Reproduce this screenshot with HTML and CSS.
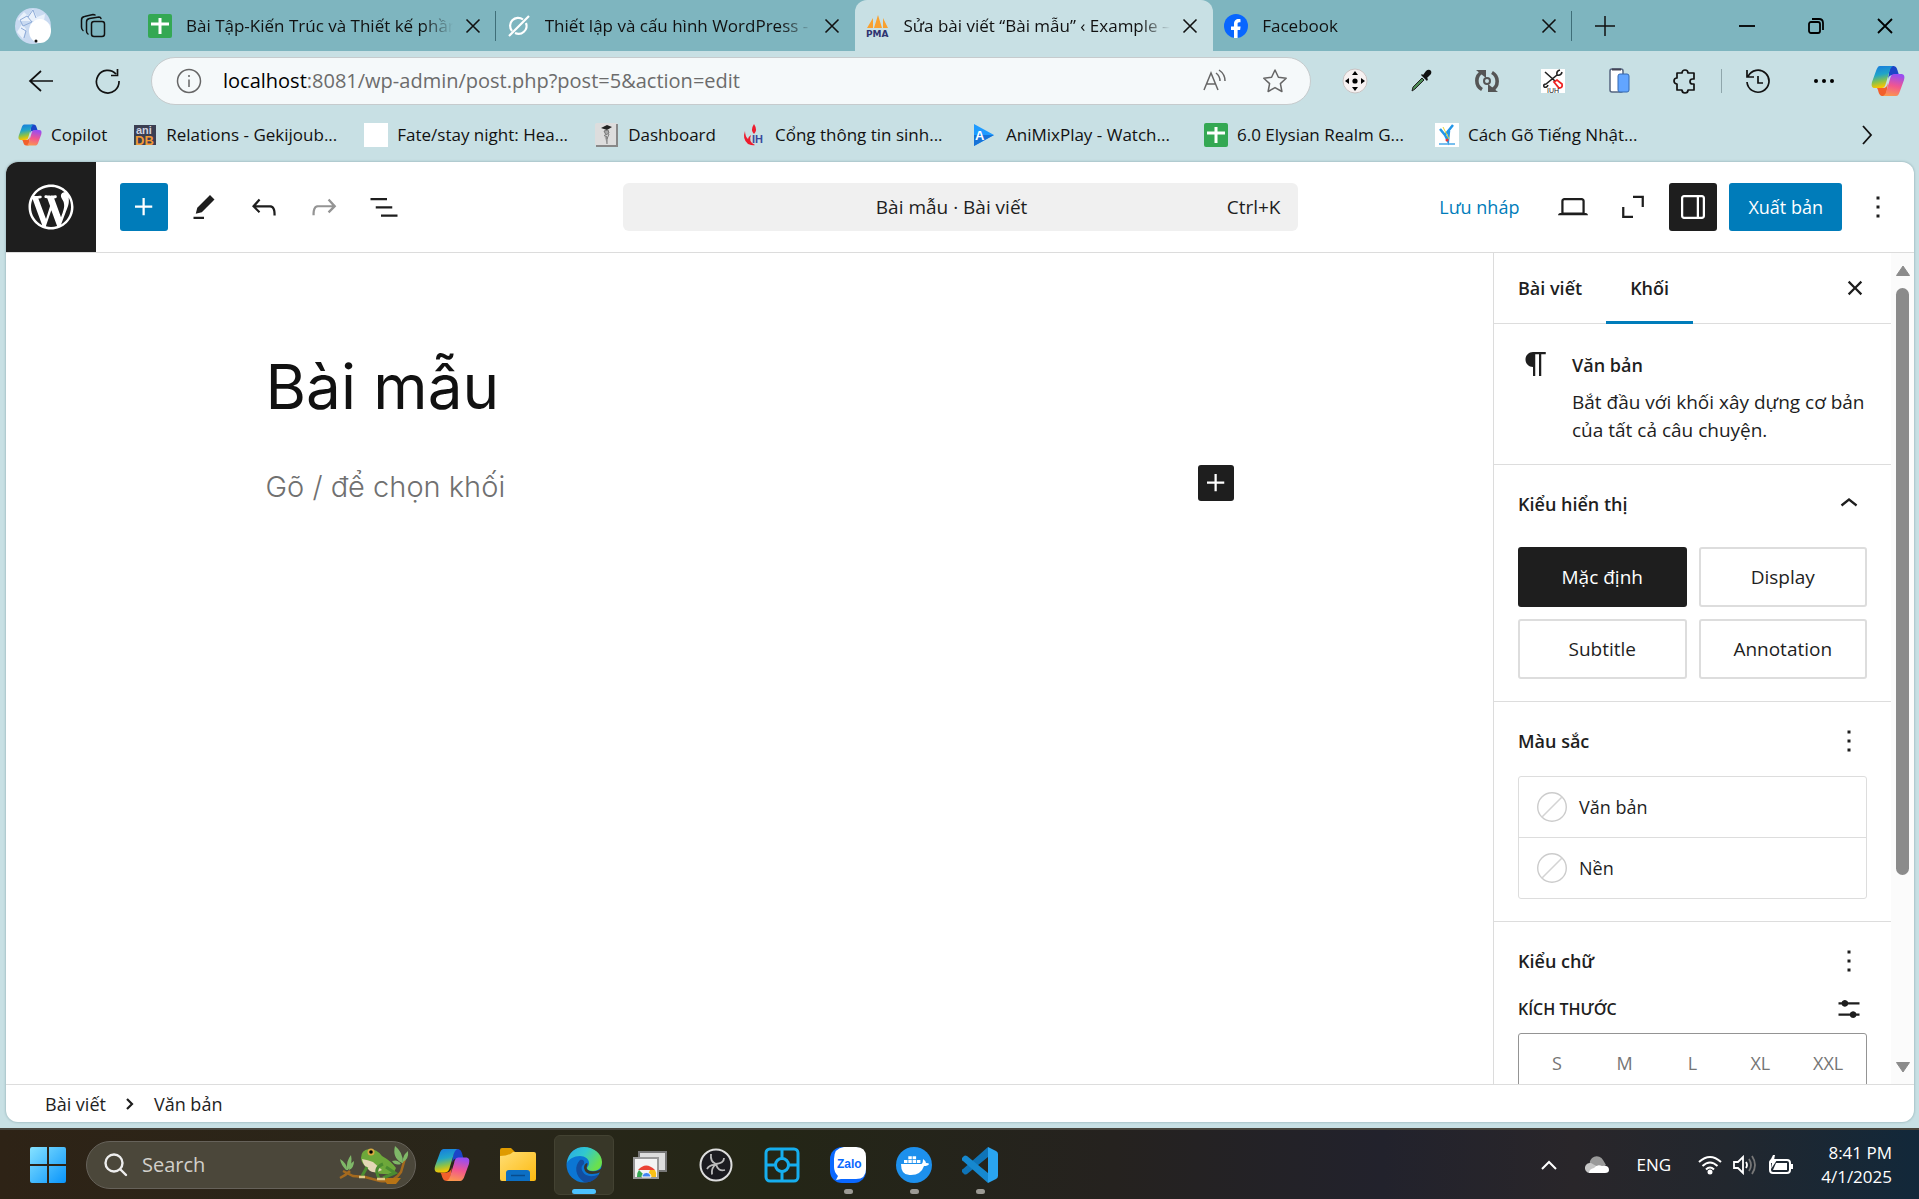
FILE: index.html
```html
<!DOCTYPE html>
<html lang="vi">
<head>
<meta charset="utf-8">
<meta name="viewport" content="width=device-width, initial-scale=1">
<title>Sửa bài viết “Bài mẫu” ‹ Example</title>
<link rel="stylesheet" href="styles.css">
</head>
<body>
<svg class="sprite" aria-hidden="true">
  <defs>
    <linearGradient id="cp-a" x1="0" y1="0" x2="0.2" y2="1"><stop offset="0" stop-color="#1678e0"/><stop offset=".45" stop-color="#21a5c8"/><stop offset=".75" stop-color="#8ac24a"/><stop offset="1" stop-color="#f8c400"/></linearGradient>
    <linearGradient id="cp-b" x1="0.4" y1="0" x2="0.2" y2="1"><stop offset="0" stop-color="#9a4df0"/><stop offset=".5" stop-color="#f2568f"/><stop offset="1" stop-color="#fb9a4b"/></linearGradient>
    <linearGradient id="edge-a" x1="0" y1="0" x2="1" y2="0.5"><stop offset="0" stop-color="#2aa8e8"/><stop offset=".5" stop-color="#30c8d0"/><stop offset="1" stop-color="#6be04c"/></linearGradient>
    <linearGradient id="win" x1="0" y1="0" x2="1" y2="1"><stop offset="0" stop-color="#86e2ff"/><stop offset="1" stop-color="#0894fb"/></linearGradient>
    <linearGradient id="folder" x1="0" y1="0" x2="1" y2="1"><stop offset="0" stop-color="#ffde74"/><stop offset="1" stop-color="#fdb90f"/></linearGradient>
    <symbol id="copilot" viewBox="0 0 34 34">
      <path d="M19 2h3c3 0 4 2 5 6l1 3h-6c-3 0-4 1-5 4z" fill="#1b45c8"/>
      <path d="M15 32h-3c-3 0-4-2-5-6l-1-2h6c3 0 4-2 5-5z" fill="#f2602c"/>
      <path d="M9 2h13c-2 1-3 3-4 7l-3 10c-1 4-2 5-5 5H4c-3 0-4-2-3-6L5 7c1-3 2-5 4-5z" fill="url(#cp-a)"/>
      <path d="M25 32H12c2-1 3-3 4-7l3-10c1-4 2-5 5-5h6c3 0 4 2 3 6l-4 11c-1 3-2 5-4 5z" fill="url(#cp-b)"/>
    </symbol>
    <symbol id="x" viewBox="0 0 24 24"><path d="M5.500 5.500l13 13M18.500 5.500l-13 13" fill="none" stroke="currentColor" stroke-width="1.600"/></symbol>
    <symbol id="sheet" viewBox="0 0 24 24"><rect width="24" height="24" rx="2" fill="#34a853"/><path d="M12 4v16M3 10h18" stroke="#fff" stroke-width="3"/></symbol>
    <symbol id="dots" viewBox="0 0 24 24"><path d="M13 19h-2v-2h2v2zm0-6h-2v-2h2v2zm0-6h-2V5h2v2z" fill="currentColor"/></symbol>
    <symbol id="plus" viewBox="0 0 24 24"><path d="M11 12.500V17.500H12.500V12.500H17.500V11H12.500V6H11V11H6V12.500H11Z" fill="currentColor"/></symbol>
    <symbol id="none" viewBox="0 0 30 30"><circle cx="15" cy="15" r="14.300" fill="#fff" stroke="#ccc" stroke-width="1.400"/><path d="M5 25L25 5" stroke="#d4d4d4" stroke-width="1.600"/></symbol>
  </defs>
</svg>

<header class="browser">
  <div class="tabstrip">
    <div class="strip-start">
      <button class="plain" aria-label="Profile"><svg width="36" height="36" viewBox="0 0 36 36"><circle cx="18" cy="18" r="18" fill="#c9daf1"/><path d="M3 11l6-7 4 4 5-7 4 8 8-3-1 7H4zM2 24l5-8 4 5-3 10z" fill="#e9f1fb"/><path d="M5 12l7-4 5 6-9 4zM6 20l5 3-2 7M13 9l5-7 3 8" fill="none" stroke="#8eabd8"/><ellipse cx="25" cy="23" rx="11" ry="12" fill="#fff"/><circle cx="21" cy="33" r="1.500" fill="#111"/></svg></button>
      <button class="plain" aria-label="Workspaces"><svg width="26" height="26" viewBox="0 0 26 26" fill="none" stroke="#111" stroke-width="1.500" stroke-linecap="round"><rect x="11.500" y="8.500" width="13" height="15" rx="2.500"/><path d="M8 21Q6.500 20 6.500 18V9q0-3 3-3.500L19 4q1.500 0 2 1.500M3 17.500Q1.500 16.500 1.500 14V7q0-3 3-3.500L13 1.500q1.500 0 2 .5"/></svg></button>
    </div>
    <nav class="tabs">
      <div class="tab tab-sep"><svg class="fav"><use href="#sheet"/></svg><span class="tab-label">Bài Tập-Kiến Trúc và Thiết kế phần</span><button class="plain close" aria-label="Close tab"><svg><use href="#x"/></svg></button></div>
      <div class="tab"><svg class="fav" viewBox="0 0 24 24" fill="none" stroke="#fff" stroke-width="2.200"><path d="M2 22L22 2M16 5.500A8 8 0 0 0 5 17M19 9a8 8 0 0 1-11 10"/></svg><span class="tab-label">Thiết lập và cấu hình WordPress -</span><button class="plain close" aria-label="Close tab"><svg><use href="#x"/></svg></button></div>
      <div class="tab tab-active"><svg class="fav" viewBox="0 0 24 24"><path d="M7 4v10H1zM12 1l4 13H8zM17 4l5 10h-5z" fill="#f9a12f"/><text class="pma" x="0" y="23">PMA</text></svg><span class="tab-label">Sửa bài viết “Bài mẫu” ‹ Example –</span><button class="plain close" aria-label="Close tab"><svg><use href="#x"/></svg></button></div>
      <div class="tab tab-sep"><svg class="fav" viewBox="0 0 24 24"><circle cx="12" cy="12" r="12" fill="#0866ff"/><path d="M10 24v-8H7v-3.600h3V10c0-3.500 2-5 4.500-5 1 0 2 .2 2 .2v3h-1.300c-1.300 0-1.600.8-1.600 1.700v2.500h3l-.5 3.600h-2.500v8z" fill="#fff"/></svg><span class="tab-label">Facebook</span><button class="plain close" aria-label="Close tab"><svg><use href="#x"/></svg></button></div>
    </nav>
    <div class="strip-end">
      <button class="plain" aria-label="New tab"><svg width="24" height="24" viewBox="0 0 24 24" stroke="#111" stroke-width="1.500"><path d="M12 2v20M2 12h20"/></svg></button>
      <div class="window-controls">
        <button class="plain" aria-label="Minimize"><svg width="18" height="18" viewBox="0 0 18 18" stroke="#000" stroke-width="1.800"><path d="M1 9h16"/></svg></button>
        <button class="plain" aria-label="Restore"><svg width="18" height="18" viewBox="0 0 18 18" fill="none" stroke="#000" stroke-width="1.800"><rect x="2" y="5" width="11" height="11" rx="2"/><path d="M5 2h7q4 0 4 4v7"/></svg></button>
        <button class="plain" aria-label="Close window"><svg width="26" height="26" viewBox="0 0 26 26" stroke="#000" stroke-width="1.800"><path d="M6 6l14 14M20 6L6 20"/></svg></button>
      </div>
    </div>
  </div>

  <div class="toolbar">
    <button class="plain slot" aria-label="Back"><svg width="26" height="26" viewBox="0 0 26 26" fill="none" stroke="#111" stroke-width="1.700"><path d="M13 3L2 13l11 10M2 13h23"/></svg></button>
    <button class="plain slot" aria-label="Refresh"><svg width="26" height="26" viewBox="0 0 26 26" fill="none" stroke="#111" stroke-width="1.700"><path d="M22 6a11.300 11.300 0 1 0 3 7M23.500 1v6.500H17"/></svg></button>
    <div class="address">
      <svg width="26" height="26" viewBox="0 0 26 26" fill="none" stroke="#666" stroke-width="1.500"><circle cx="13" cy="13" r="11.500"/><path d="M13 11.500V19M13 7v2"/></svg>
      <p class="url"><span class="host">localhost</span>:8081/wp-admin/post.php?post=5&amp;action=edit</p>
      <button class="plain" aria-label="Read aloud"><svg width="26" height="26" viewBox="0 0 26 26" fill="none" stroke="#666" stroke-width="1.500"><path d="M2 22L9 5l7 17M4.500 16h9M14 5q4 3 4 8M17 2q6 4 6 11"/></svg></button>
      <button class="plain" aria-label="Favorite"><svg width="26" height="26" viewBox="0 0 26 26" fill="none" stroke="#666" stroke-width="1.500" stroke-linejoin="round"><path d="M13 2l3.400 7.200 7.800 1-5.800 5.400 1.500 7.900-6.900-3.900-6.900 3.900 1.500-7.900L1.800 10.200l7.800-1z"/></svg></button>
    </div>
    <button class="plain slot" aria-label="Move extension"><svg width="26" height="26" viewBox="0 0 26 26"><circle cx="13" cy="13" r="12" fill="#f6f1f1" stroke="#c9c3c3"/><path d="M13 3l3 4h-6zM13 23l3-4h-6zM3 13l4-3v6zM23 13l-4-3v6z"/><circle cx="13" cy="13" r="2.600"/></svg></button>
    <button class="plain slot" aria-label="Color picker"><svg width="24" height="24" viewBox="0 0 24 24"><path d="M3 22l1-4L13 9l2 2-9 9z" fill="#4c8a55" stroke="#222"/><path d="M12 6l6 6 1-2-1-1 4-4q1-3-1-4t-4 1l-3 4-1-1z" fill="#111"/></svg></button>
    <button class="plain slot" aria-label="Sync extension"><svg width="26" height="26" viewBox="0 0 26 26" fill="none" stroke="#555" stroke-width="3.600"><path d="M8 4A10 10 0 0 0 8 21.500M18 22a10 10 0 0 0 0-17.500"/><path d="M2 2h10v8zM24 24H14v-8z" fill="#555" stroke="none"/><circle cx="13" cy="13" r="3" stroke-width="2"/></svg></button>
    <button class="plain slot" aria-label="IUH tools"><svg width="24" height="24" viewBox="0 0 24 24"><path d="M0 0h24v24H0z" fill="#fff"/><path d="M4 3l10 9M3 18q-1-3 2-3L16 6q-1-4 3-5M16 6q4 1 5-3M3 18q3 1 4-2" stroke="#222" stroke-width="1.600" fill="none"/><path d="M13 13l3-2 5 4q1 4-3 4z" fill="none" stroke="#e22" stroke-width="1.800"/><text class="tiny" x="6" y="24">IUH</text></svg></button>
    <button class="plain slot" aria-label="Responsive view"><svg width="24" height="26" viewBox="0 0 24 26"><rect x="3" y="1" width="13" height="23" rx="2" fill="#fff" stroke="#556580" stroke-width="1.500"/><path d="M5 1.500h9" stroke="#445" stroke-width="2"/><rect x="11" y="6" width="11" height="18" rx="2" fill="#62a5ff" stroke="#3469b0"/></svg></button>
    <button class="plain slot" aria-label="Extensions"><svg width="26" height="26" viewBox="0 0 26 26" fill="none" stroke="#111" stroke-width="1.700" stroke-linejoin="round"><path d="M5 5h5a3 3 0 0 1 6 0h6v6h-1.500a2.500 2.500 0 0 0 0 5H22v6h-6a3 3 0 0 1-6 0H5v-6a3 3 0 0 1 0-6z"/></svg></button>
    <span class="tool-sep"></span>
    <button class="plain slot" aria-label="History"><svg width="26" height="26" viewBox="0 0 26 26" fill="none" stroke="#111" stroke-width="1.700"><path d="M2 2v7h7M3 8.500A11 11 0 1 1 2 14M13 8v7h5"/></svg></button>
    <button class="plain slot" aria-label="More"><svg width="22" height="6" viewBox="0 0 22 6"><circle cx="3" cy="3" r="2"/><circle cx="11" cy="3" r="2"/><circle cx="19" cy="3" r="2"/></svg></button>
    <button class="plain slot slot-last" aria-label="Copilot"><svg width="34" height="34"><use href="#copilot"/></svg></button>
  </div>

  <nav class="bookmarks">
    <a class="bm" href="#"><svg class="fav"><use href="#copilot"/></svg><span>Copilot</span></a>
    <a class="bm bm-long" href="#"><svg class="fav" viewBox="0 0 24 24"><path d="M1 2h22v20H1z" fill="#3b3f52"/><text class="ani" x="3" y="11">ani</text><text class="db" x="2" y="22">DB</text></svg><span>Relations - Gekijoub...</span></a>
    <a class="bm bm-long" href="#"><svg class="fav" viewBox="0 0 24 24"><path d="M0 0h24v24H0z" fill="#fff"/></svg><span>Fate/stay night: Hea...</span></a>
    <a class="bm" href="#"><svg class="fav" viewBox="0 0 24 24"><rect width="23" height="23" rx="2" fill="#ddd"/><path d="M22 1v22H1" fill="none" stroke="#888" stroke-width="2"/><path d="M6 5l6-3 5 2-5 3z" fill="#222"/><path d="M9 8l4-1 1 3-3 2zM9 12l3 2v7M14 11l-2 5" fill="#aaa" stroke="#777"/></svg><span>Dashboard</span></a>
    <a class="bm bm-long" href="#"><svg class="fav" viewBox="0 0 24 24"><path d="M3 8q-3 8 3 13 5 2 7 1-7-3-4-10-3 2-3 4-3-3-3-8zM12 1q-4 6 0 10 4-4 0-10z" fill="#ed1c2e"/><text class="ih" x="10" y="20">IH</text></svg><span>Cổng thông tin sinh...</span></a>
    <a class="bm bm-long" href="#"><svg class="fav" viewBox="0 0 24 24"><path d="M1 1l20 11L1 23z" fill="#1e9bff"/><path d="M1 23V12h20z" fill="#1673d8"/><text class="am" x="2" y="17">A</text></svg><span>AniMixPlay - Watch...</span></a>
    <a class="bm bm-long" href="#"><svg class="fav"><use href="#sheet"/></svg><span>6.0 Elysian Realm G...</span></a>
    <a class="bm bm-long" href="#"><svg class="fav" viewBox="0 0 24 24"><path d="M0 0h24v24H0z" fill="#fff"/><path d="M5 6l5 6 8-10M10 12l3 6 1-10" fill="none" stroke="#2196e8" stroke-width="2.500"/><path d="M8 4l6 12" stroke="#e6d531" stroke-width="1"/><circle cx="12" cy="17" r="1.500" fill="#e33"/><path d="M4 21h16" stroke="#4aa8e8" stroke-width="1.500"/></svg><span>Cách Gõ Tiếng Nhật...</span></a>
    <button class="plain bm-more" aria-label="More bookmarks"><svg width="12" height="20" viewBox="0 0 12 20" fill="none" stroke="#111" stroke-width="1.800"><path d="M2 1l8 9-8 9"/></svg></button>
  </nav>
</header>

<main class="page">
  <div class="ed-header">
    <div class="ed-left">
      <a class="wp-logo" href="#" aria-label="WordPress"><svg width="54" height="54" viewBox="-2 -2 24 24" fill="#fff"><path d="M20 10c0-5.510-4.490-10-10-10C4.480 0 0 4.490 0 10c0 5.520 4.480 10 10 10 5.510 0 10-4.480 10-10zM7.780 15.370L4.370 6.220c.55-.02 1.170-.08 1.170-.08.5-.06.44-1.130-.06-1.110 0 0-1.450.11-2.370.11-.18 0-.37 0-.58-.01C4.120 2.690 6.870 1.110 10 1.110c2.330 0 4.450.87 6.050 2.340-.68-.11-1.650.39-1.650 1.580 0 .74.45 1.360.9 2.100.35.61.55 1.360.55 2.460 0 1.490-1.400 5-1.400 5l-3.030-8.370c.54-.02.82-.17.82-.17.5-.05.44-1.250-.06-1.220 0 0-1.440.12-2.380.12-.87 0-2.330-.12-2.330-.12-.5-.03-.56 1.200-.06 1.220l.92.08 1.260 3.410zM17.410 10c.24-.64.74-1.870.43-4.250.7 1.290 1.050 2.710 1.050 4.250 0 3.290-1.730 6.240-4.400 7.780.97-2.590 1.940-5.200 2.920-7.780zM6.100 18.090C3.120 16.650 1.110 13.530 1.110 10c0-1.300.23-2.480.72-3.590C3.250 10.300 4.670 14.200 6.100 18.090zm4.030-6.630l2.580 6.980c-.86.29-1.760.45-2.710.45-.79 0-1.570-.11-2.290-.33.81-2.380 1.620-4.740 2.420-7.100z"/></svg></a>
      <button class="icon-btn btn-blue" aria-label="Thêm khối"><svg class="i36"><use href="#plus"/></svg></button>
      <button class="icon-btn" aria-label="Công cụ"><svg class="i36" viewBox="0 0 24 24"><path d="m19 7-3-3-8.500 8.500-1 4 4-1L19 7Zm-7 11.500H5V20h7v-1.500Z" fill="currentColor"/></svg></button>
      <button class="icon-btn" aria-label="Hoàn tác"><svg class="i36" viewBox="0 0 24 24"><path d="M18.300 11.700c-.6-.6-1.400-.9-2.300-.9H6.700l2.900-3.300-1.100-1-4.500 5L8.500 16l1-1-2.700-2.700H16c.5 0 .9.2 1.300.5 1 1 1 3.400 1 4.500v.3h1.500v-.2c0-1.500 0-4.300-1.500-5.700z" fill="currentColor"/></svg></button>
      <button class="icon-btn is-off" aria-label="Làm lại"><svg class="i36" viewBox="0 0 24 24"><path d="M15.600 6.500l-1.100 1 2.900 3.300H8c-.9 0-1.700.3-2.300.9-1.400 1.500-1.400 4.200-1.400 5.600v.2h1.500v-.3c0-1.100 0-3.500 1-4.500.3-.3.7-.5 1.300-.5h9.200L14.500 15l1.100 1.100 4.600-4.600-4.600-5z" fill="currentColor"/></svg></button>
      <button class="icon-btn" aria-label="Tổng quan tài liệu"><svg class="i36" viewBox="0 0 24 24"><path d="M3 6h11v1.500H3V6Zm3.500 5.500h11V13h-11v-1.500ZM21 17H10v1.500h11V17Z" fill="currentColor"/></svg></button>
    </div>
    <button class="doc-bar"><span class="doc-title">Bài mẫu · Bài viết</span><span>Ctrl+K</span></button>
    <div class="ed-right">
      <button class="text-btn">Lưu nháp</button>
      <button class="icon-btn" aria-label="Xem"><svg class="i36" viewBox="0 0 24 24"><path d="M20.500 16h-.7V8c0-1.100-.9-2-2-2H6.200c-1.100 0-2 .9-2 2v8h-.7c-.8 0-1.500.7-1.500 1.500h20c0-.8-.7-1.500-1.500-1.500zM5.700 8c0-.3.2-.5.5-.5h11.600c.3 0 .5.2.5.5v7.600H5.700V8z" fill="currentColor"/></svg></button>
      <button class="icon-btn" aria-label="Mở rộng"><svg class="i36" viewBox="0 0 24 24" fill="none" stroke="currentColor" stroke-width="1.500"><path d="M12 5.250h6.500V12M5.500 12v6.500H12"/></svg></button>
      <button class="icon-btn btn-dark" aria-label="Cài đặt"><svg class="i36" viewBox="0 0 24 24"><path d="M18 4H6c-1.100 0-2 .9-2 2v12c0 1.100.9 2 2 2h12c1.100 0 2-.9 2-2V6c0-1.100-.9-2-2-2zm-4 14.500H6c-.3 0-.5-.2-.5-.5V6c0-.3.2-.5.5-.5h8.500v13zm4.500-.5c0 .3-.2.5-.5.5h-2v-13h2c.3 0 .5.2.5.5v12z" fill="currentColor"/></svg></button>
      <button class="publish">Xuất bản</button>
      <button class="icon-btn" aria-label="Tùy chọn"><svg class="i36"><use href="#dots"/></svg></button>
    </div>
  </div>

  <div class="ed-body">
    <section class="canvas">
      <div class="post">
        <h1 class="post-title">Bài mẫu</h1>
        <div class="block-row">
          <p class="placeholder">Gõ / để chọn khối</p>
          <button class="appender" aria-label="Thêm khối"><svg class="i36"><use href="#plus"/></svg></button>
        </div>
      </div>
    </section>

    <aside class="sidebar">
      <div class="side-content">
        <div class="side-tabs">
          <button class="side-tab">Bài viết</button>
          <button class="side-tab side-tab-on">Khối</button>
          <button class="icon-btn side-close" aria-label="Đóng"><svg class="i36" viewBox="0 0 24 24"><path d="M12 13.060l3.712 3.713 1.061-1.060L13.061 12l3.712-3.712-1.060-1.060L12 10.938 8.288 7.227l-1.061 1.060L10.939 12l-3.712 3.712 1.060 1.061L12 13.061z" fill="currentColor"/></svg></button>
        </div>
        <section class="card">
          <svg class="i36" viewBox="0 0 24 24"><path d="m9.996 14v-.225l.004 0v6.225h1.500v-14.500h2.500v14.500h1.500v-14.500h3v-1.500h-8.504c-2.761 0-5 2.239-5 5 0 2.761 2.239 5 5 5z" fill="currentColor"/></svg>
          <div class="card-body">
            <h2 class="side-h">Văn bản</h2>
            <p class="card-text">Bắt đầu với khối xây dựng cơ bản của tất cả câu chuyện.</p>
          </div>
        </section>
        <section class="panel">
          <div class="panel-head"><h2 class="side-h">Kiểu hiển thị</h2><button class="plain" aria-label="Thu gọn"><svg class="i36" viewBox="0 0 24 24"><path d="M6.500 12.400L12 8l5.500 4.400-.9 1.200L12 10l-4.500 3.600-1-1.200z" fill="currentColor"/></svg></button></div>
          <div class="styles">
            <button class="style-btn style-on">Mặc định</button>
            <button class="style-btn">Display</button>
            <button class="style-btn">Subtitle</button>
            <button class="style-btn">Annotation</button>
          </div>
        </section>
        <section class="panel">
          <div class="panel-head"><h2 class="side-h">Màu sắc</h2><button class="plain" aria-label="Tùy chọn màu sắc"><svg class="i36"><use href="#dots"/></svg></button></div>
          <div class="colors">
            <button class="color-row"><svg width="30" height="30"><use href="#none"/></svg>Văn bản</button>
            <button class="color-row"><svg width="30" height="30"><use href="#none"/></svg>Nền</button>
          </div>
        </section>
        <section class="panel">
          <div class="panel-head"><h2 class="side-h">Kiểu chữ</h2><button class="plain" aria-label="Tùy chọn kiểu chữ"><svg class="i36"><use href="#dots"/></svg></button></div>
          <div class="size-head"><h3 class="size-label">KÍCH THƯỚC</h3><button class="plain" aria-label="Kích thước tùy chỉnh"><svg class="i36" viewBox="0 0 24 24"><path d="m19 7.500h-7.628c-.309-.874-1.142-1.500-2.122-1.500-.980 0-1.813.626-2.122 1.500h-2.128v1.500h2.128c.309.874 1.142 1.500 2.122 1.500.980 0 1.813-.626 2.122-1.500h7.628zM19 15h-2.128c-.309-.874-1.142-1.500-2.122-1.500s-1.813.626-2.122 1.500h-7.628v1.500h7.628c.309.874 1.142 1.500 2.122 1.500s1.813-.626 2.122-1.500h2.128z" fill="currentColor"/></svg></button></div>
          <div class="sizes"><button class="plain">S</button><button class="plain">M</button><button class="plain">L</button><button class="plain">XL</button><button class="plain">XXL</button></div>
        </section>
      </div>
      <div class="scrollbar">
        <svg width="16" height="12" viewBox="0 0 16 12"><path d="M8 1l6.500 9.500h-13z" fill="#8b8b8b" stroke="#8b8b8b" stroke-linejoin="round"/></svg>
        <div class="track"><div class="thumb"></div></div>
        <svg width="16" height="12" viewBox="0 0 16 12"><path d="M8 11l6.500-9.500h-13z" fill="#8b8b8b" stroke="#8b8b8b" stroke-linejoin="round"/></svg>
      </div>
    </aside>
  </div>

  <nav class="crumbs">
    <a href="#">Bài viết</a>
    <svg width="8" height="12" viewBox="0 0 8 12" fill="none" stroke="#1e1e1e" stroke-width="2.200"><path d="M1 1l5 5-5 5"/></svg>
    <a href="#">Văn bản</a>
  </nav>
</main>

<footer class="taskbar">
  <button class="plain start" aria-label="Start"><svg width="36" height="36" viewBox="0 0 36 36" fill="url(#win)"><path d="M2 0h15v17H0V2q0-2 2-2zM19 0h15q2 0 2 2v15H19zM0 19h17v17H2q-2 0-2-2zM19 19h17v15q0 2-2 2H19z"/></svg></button>
  <label class="search">
    <svg width="24" height="24" viewBox="0 0 24 24" fill="none" stroke="#eee" stroke-width="2.400"><circle cx="10" cy="10" r="8.500"/><path d="M16.500 16.500l5.500 5.500" stroke-linecap="round"/></svg>
    <input type="text" placeholder="Search" aria-label="Search">
    <svg width="70" height="38" viewBox="0 0 70 38"><path d="M1 32q6-3 10-7M4 25l10 5 12 1 15 4q14 2 21-9l5-17" fill="none" stroke="#a56a1e" stroke-width="2.500"/><path d="M44 32h18l-5 6h-9z" fill="#b87415"/><path d="M7 24q-5-5-6-11 7 4 7 11M8 24q-1-9 4-15 2 9-3 15M10 24q0-6 5-9 0 7-5 9M63 17Q53 12 56 0q8 6 8 17M64 16q-1-6 5-11 1 8-5 11M62 18q-6 2-9-3 6-2 9 3" fill="#7fb868"/><path d="M22 12q0-8 8-9 8 0 13 7 9 5 14 12-2 7-12 6-10 0-14-5-9-4-9-11z" fill="#6da83a"/><path d="M23 13q6 1 11 3l9 8q-9 5-14-1-5-4-6-10z" fill="#e4d6b6"/><circle cx="32" cy="6" r="3.500" fill="#d8a941"/><circle cx="32" cy="6" r="1.800"/><path d="M28 21l-5 9M44 18q-10 4-4 14M47 21l9 6-12 5" fill="none" stroke="#4b8c30" stroke-width="3"/><path d="M20 31h6M38 33h8" stroke="#e0cb8a" stroke-width="2.500"/></svg>
  </label>
  <nav class="apps">
    <button class="app" aria-label="Copilot"><svg width="36" height="36"><use href="#copilot"/></svg></button>
    <button class="app" aria-label="File Explorer"><svg width="36" height="36" viewBox="0 0 36 36"><path d="M0 3q0-2 2-2h9l4 4v5H0z" fill="#df9b00"/><path d="M0 9q9 0 13-4h21q2 0 2 2v25q0 2-2 2H2q-2 0-2-2z" fill="url(#folder)"/><path d="M6 34v-8q0-3 3-3h18q3 0 3 3v8z" fill="#0c6fc4"/><path d="M11 28.500h14" stroke="#084c8c" stroke-width="1.500"/></svg></button>
    <button class="app app-on" aria-label="Edge"><svg width="36" height="36" viewBox="0 0 36 36"><circle cx="18" cy="18" r="17.500" fill="#0b76d4"/><path d="M1 16C2 6 9 0 18 0c10 0 18 7 18 15 0 6-4 9-9 9-4 0-6-1-6-3 0-1 2-2 2-5 0-4-4-7-9-7-6 0-11 3-13 7z" fill="url(#edge-a)"/><path d="M14 13c-6 6-5 16 4 22 6 1 12-2 15-8-7 4-14 2-16-2-2-3-2-6 1-8 1-3-1-5-4-4z" fill="#124d9f"/><path d="M21 16q-3 1-3 5 1 6 8 6 5 0 9-2l3-8q-2 6-8 7-6 1-8-1-2-1-1-4 1-3 0-3z" fill="#38372a"/></svg></button>
    <button class="app" aria-label="Chrome Remote Desktop"><svg width="34" height="34" viewBox="0 0 34 34"><path d="M6 4h27v19H6z" fill="#ddd" stroke="#777" stroke-width="2"/><path d="M1 10h24v20H1z" fill="#f4f4f4" stroke="#999" stroke-width="2"/><path d="M4 29a9 9 0 0 1 2-7l7 7z" fill="#34a853"/><path d="M5 22q8-9 17 0z" fill="#ea4335"/><path d="M22 22q2 3 1 7H14l3-7z" fill="#fbc116"/><path d="M9 29a4.500 4.500 0 1 1 9 0z" fill="#4285f4" stroke="#fff"/></svg></button>
    <button class="app" aria-label="OBS"><svg width="34" height="34" viewBox="0 0 34 34"><circle cx="17" cy="17" r="15.500" fill="#1b1b20" stroke="#ddd" stroke-width="2"/><path d="M12 6q-1 8 5 10 8-1 8-6M17 16.500q-5 3-4 10M17 16q2 8 9 6M17 17q-6-1-9 4" fill="none" stroke="#bbb" stroke-width="1.800"/></svg></button>
    <button class="app" aria-label="Device app"><svg width="36" height="36" viewBox="0 0 36 36" fill="none" stroke="#16aeee" stroke-width="3"><rect x="2" y="2" width="32" height="32" rx="4"/><circle cx="18" cy="18" r="6.500"/><path d="M18 2v9.500M18 24.500V34M2 18h9.500M24.500 18H34"/></svg></button>
    <button class="app app-run" aria-label="Zalo"><svg width="36" height="36" viewBox="0 0 36 36"><rect width="36" height="36" rx="12" fill="#0a68ff"/><path d="M14 0h12q10 0 10 10v12q0 10-10 10H11l-5 1 2-4q-4-4-4-9v-8Q4 1 14 0z" fill="#fff"/><text class="zalo" x="7" y="21">Zalo</text></svg></button>
    <button class="app app-run" aria-label="Docker"><svg width="36" height="36" viewBox="0 0 36 36"><circle cx="18" cy="18" r="18" fill="#1d90ed"/><path d="M5 17h20q2 0 2-5 3 2 3 4 3 0 3 1-1 2-5 2-3 9-13 9Q5 29 5 17zM8 13h3.500v3H8zM12.300 13h3.500v3h-3.500zM16.600 13h3.500v3h-3.500zM20.900 13h3.500v3h-3.500zM12.300 9.300h3.500v3h-3.500zM16.600 9.300h3.500v3h-3.500z" fill="#fff"/></svg></button>
    <button class="app app-run" aria-label="VS Code"><svg width="36" height="36" viewBox="0 0 36 36"><path d="M26 0v10L5 27q-2 1-3 0l-2-2q-1-2 1-3z" fill="#0f74b8"/><path d="M26 36V26L5 9q-2-1-3 0l-2 2q-1 2 1 3z" fill="#1688cf"/><path d="M26 0l8 4q2 1 2 3v22q0 2-2 3l-8 4z" fill="#2aa4f0"/></svg></button>
  </nav>
  <div class="tray">
    <svg width="16" height="10" viewBox="0 0 16 10" fill="none" stroke="#fff" stroke-width="2"><path d="M1 9l7-7 7 7"/></svg>
    <svg width="26" height="18" viewBox="0 0 26 18"><path d="M6 9a7 7 0 0 1 13-5l3 5-8 5z" fill="#9a9a9a"/><path d="M5 17a5 5 0 1 1 2-10l9 5-6 5z" fill="#c6c6c6"/><path d="M5 17q0-4 5-5 3-4 8-2 7-1 7 4 0 3-4 3z" fill="#fff"/></svg>
    <span class="lang">ENG</span>
    <span class="status">
      <svg width="24" height="20" viewBox="0 0 24 20" fill="none" stroke="#fff" stroke-width="2"><path d="M1 7q11-10 22 0M4.500 11q7.500-7 15 0M8 14.500q4-4 8 0"/><circle cx="12" cy="17" r="1.500" fill="#fff"/></svg>
      <svg width="24" height="20" viewBox="0 0 24 20" fill="none" stroke="#fff" stroke-width="1.800"><path d="M1 7h4l5-5v16l-5-5H1zM13 7q2 3 0 6"/><path d="M16 4q4 6 0 12M19 1q6 9 0 18" stroke="#777"/></svg>
      <svg width="26" height="20" viewBox="0 0 26 20"><rect x="2" y="5" width="20" height="13" rx="3" fill="none" stroke="#fff" stroke-width="2"/><path d="M8 8h11v7H5zM23 9h2v5h-2zM5 0L1 8h3l-1 6 6-9H6l1-5z" fill="#fff"/></svg>
    </span>
    <div class="clock"><span>8:41 PM</span><span>4/1/2025</span></div>
  </div>
</footer>
</body>
</html>
```

FILE: styles.css
```css
* { box-sizing: border-box; }

body {
  margin: 0;
  height: 100vh;
  display: flex;
  flex-direction: column;
  overflow: hidden;
  background: #c8e0e4;
  color: #1e1e1e;
  font: 18px/24px "Open Sans", "Noto Sans", sans-serif;
}

h1, h2, h3, p { margin: 0; }
a { color: inherit; text-decoration: none; }
svg { display: block; flex: none; }
button { font: inherit; color: inherit; cursor: pointer; }
.sprite { position: absolute; width: 0; height: 0; }

.plain {
  display: flex;
  align-items: center;
  justify-content: center;
  padding: 0;
  border: 0;
  background: none;
}

.i36 { width: 36px; height: 36px; }
.fav { width: 24px; height: 24px; }

/* Browser chrome */
.browser { flex: none; color: #111; font-size: 17px; }

.tabstrip { display: flex; height: 51px; background: #7eb5bf; }
.strip-start { display: flex; flex: none; width: 137px; gap: 29px; padding-left: 15px; }
.strip-end { display: flex; flex: none; width: 347px; justify-content: space-between; padding-left: 21px; }
.window-controls { display: flex; }
.window-controls .plain { width: 69px; }

.tabs { display: flex; flex: 1; min-width: 0; }
.tab {
  display: flex;
  flex: 1;
  align-items: center;
  min-width: 0;
  padding: 0 11px;
}
.tab-sep { background: linear-gradient(#3f6e78, #3f6e78) right center / 1px 30px no-repeat; }
.tab-active { background: #c8e0e4; border-radius: 12px 12px 0 0; }
.tab-label {
  flex: 1;
  margin: 0 8px 0 14px;
  overflow: hidden;
  white-space: nowrap;
  mask-image: linear-gradient(to right, #000 calc(100% - 30px), transparent);
}
.close, .close svg { width: 24px; height: 24px; }

.toolbar { display: flex; height: 60px; align-items: center; padding-left: 8px; }
.slot { flex: none; width: 66px; height: 48px; }
.slot-last { width: 62px; }
.tool-sep { width: 1px; height: 24px; margin: 0 3px; background: #8fa6ab; }
.address {
  display: flex;
  flex: 1;
  align-items: center;
  gap: 34px;
  min-width: 0;
  height: 48px;
  margin: 0 11px;
  padding: 0 22px 0 24px;
  border: 1px solid #c6cbcd;
  border-radius: 24px;
  background: #f5f9fa;
}
.url { flex: 1; margin-left: -13px; color: #6c6c6c; font-size: 20px; white-space: nowrap; overflow: hidden; }
.host { color: #000; }

.bookmarks { display: flex; height: 51px; align-items: center; padding: 0 0 4px 18px; }
.bm { display: flex; flex: none; align-items: center; gap: 9px; padding-right: 26px; white-space: nowrap; }
.bm-long { width: 231px; padding-right: 0; }
.bm-more { margin: 0 46px 0 auto; }

.pma { font: bold 9px "DejaVu Sans", sans-serif; fill: #2f3470; }
.tiny { font: 7px "Liberation Sans", sans-serif; fill: #222; }
.ani { font: bold 11px "Liberation Sans", sans-serif; fill: #cfd3e0; }
.db { font: bold 13px "Liberation Sans", sans-serif; fill: #f29a38; }
.ih { font: bold 11px "Liberation Sans", sans-serif; fill: #3a4a9c; }
.am { font: bold 13px "Liberation Sans", sans-serif; fill: #fff; }
.zalo { font: bold 12px "Liberation Sans", sans-serif; fill: #0a68ff; }

/* Editor */
.page {
  display: flex;
  flex: 1;
  flex-direction: column;
  min-height: 0;
  margin: 0 5px 6px 6px;
  overflow: hidden;
  border-radius: 12px;
  background: #fff;
  box-shadow: 0 0 2px 1px #a9c4c9;
}

.ed-header {
  display: grid;
  grid-template-columns: 1fr minmax(0, 675px) 1fr;
  align-items: center;
  flex: none;
  height: 91px;
  border-bottom: 1px solid #dcdcdc;
}
.ed-left, .ed-right { display: flex; align-items: center; gap: 12px; }
.ed-right { justify-content: flex-end; padding-right: 12px; }
.wp-logo {
  display: flex;
  width: 90px;
  height: 90px;
  align-items: center;
  justify-content: center;
  margin-right: 12px;
  background: #1e1e1e;
}
.icon-btn {
  display: flex;
  flex: none;
  width: 48px;
  height: 48px;
  align-items: center;
  justify-content: center;
  padding: 0;
  border: 0;
  border-radius: 3px;
  background: none;
}
.btn-blue { background: #007cba; color: #fff; }
.btn-dark { background: #1e1e1e; color: #fff; }
.is-off { color: #949494; }
.doc-bar {
  display: flex;
  height: 48px;
  align-items: center;
  padding: 0 17px 0 54px;
  border: 0;
  border-radius: 6px;
  background: #f0f0f0;
  font-size: 19px;
}
.doc-title { flex: 1; text-align: center; }
.text-btn { padding: 0 6px; margin-right: 12px; border: 0; background: none; color: #007cba; }
.publish {
  height: 48px;
  padding: 0 19px;
  border: 0;
  border-radius: 3px;
  background: #007cba;
  color: #fff;
  white-space: nowrap;
}

.ed-body { display: flex; flex: 1; min-height: 0; }
.canvas { flex: 1; min-width: 0; overflow: hidden; }
.post { max-width: 968px; margin: 0 auto; padding-top: 95px; }
.post-title { color: #111; font: 400 62px/78px Inter, "Open Sans", sans-serif; }
.block-row { display: flex; justify-content: space-between; margin-top: 39px; }
.placeholder { color: #707070; font: 300 29px/44px Inter, "Open Sans", sans-serif; }
.appender {
  display: flex;
  width: 36px;
  height: 36px;
  padding: 0;
  border: 0;
  border-radius: 3px;
  background: #1e1e1e;
  color: #fff;
}

.sidebar { display: flex; flex: none; width: 421px; overflow: hidden; border-left: 1px solid #dcdcdc; }
.side-content { flex: 1; min-width: 0; }
.side-tabs { display: flex; height: 71px; align-items: center; border-bottom: 1px solid #ddd; }
.side-tab { height: 71px; padding: 0 24px; border: 0; background: none; font-weight: 600; }
.side-tab-on { box-shadow: inset 0 -3px #007cba; }
.side-close { margin: 0 12px 0 auto; }
.side-h { font-size: 18px; line-height: 28px; font-weight: 600; }
.card { display: flex; gap: 18px; padding: 22px 20px 20px 24px; }
.card-body { padding-top: 5px; }
.card-text { margin-top: 9px; font-size: 19px; line-height: 28px; }

.panel { padding: 13px 24px 22px; border-top: 1px solid #ddd; }
.panel-head { display: flex; height: 52px; align-items: center; justify-content: space-between; }
.styles { display: grid; grid-template-columns: 1fr 1fr; gap: 12px; margin-top: 17px; }
.style-btn { height: 60px; padding: 0; border: 2px solid #ddd; border-radius: 3px; background: #fff; font-size: 19px; }
.style-on { border-color: #1e1e1e; background: #1e1e1e; color: #fff; }
.colors { margin-top: 9px; border: 1px solid #ddd; border-radius: 3px; }
.color-row {
  display: flex;
  width: 100%;
  height: 60px;
  align-items: center;
  gap: 12px;
  padding: 0 18px;
  border: 0;
  background: none;
}
.color-row + .color-row { height: 61px; border-top: 1px solid #ddd; }
.size-head { display: flex; height: 36px; align-items: center; justify-content: space-between; margin: 4px 0 6px; }
.size-label { font-size: 16px; font-weight: 600; }
.sizes {
  display: grid;
  grid-template-columns: repeat(5, 1fr);
  height: 60px;
  padding: 0 4px;
  border: 1px solid #949494;
  border-radius: 3px;
  color: #757575;
}

.scrollbar { display: flex; flex: none; width: 23px; flex-direction: column; align-items: center; padding: 12px 0 11px; background: #fbfbfb; }
.track { flex: 1; padding-top: 11px; }
.thumb { width: 13px; height: 76%; border-radius: 7px; background: #8b8b8b; }

.crumbs { display: flex; flex: none; height: 38px; align-items: center; gap: 20px; padding-left: 39px; border-top: 1px solid #ddd; }

/* Taskbar */
.taskbar {
  display: flex;
  flex: none;
  height: 71px;
  align-items: center;
  border-top: 2px solid #47443c;
  background: linear-gradient(to right, #2e2316, #29261a 25%, #242616 40%, #25221f 58%, #22222c 72%, #29262a 82%, #22272e 90%, #12283a);
  color: #fff;
}
.start { width: 48px; height: 60px; margin: 0 14px 0 24px; }
.search {
  display: flex;
  width: 330px;
  height: 48px;
  align-items: center;
  gap: 14px;
  padding: 0 6px 0 17px;
  border: 1px solid #66625a;
  border-radius: 24px;
  background: #4b473a;
}
.search input { flex: 1; min-width: 0; padding: 0; border: 0; background: none; color: #fff; font: 20px/28px "Open Sans", sans-serif; }
.search input::placeholder { color: #d2d0cb; }
.apps { display: flex; gap: 6px; margin-left: 6px; }
.app {
  position: relative;
  display: flex;
  width: 60px;
  height: 60px;
  align-items: center;
  justify-content: center;
  padding: 0;
  border: 1px solid transparent;
  border-radius: 6px;
  background: none;
}
.app-on { border-color: #434232; background: #383728; }
.app-on::after, .app-run::after {
  content: "";
  position: absolute;
  bottom: 0;
  width: 9px;
  height: 5px;
  border-radius: 3px;
  background: #9c9a94;
}
.app-on::after { width: 24px; background: #4cc2ff; }
.tray { display: flex; align-items: center; gap: 27px; margin-left: auto; padding-right: 27px; font-size: 17px; }
.status { display: flex; gap: 11px; }
.clock { display: flex; flex-direction: column; align-items: flex-end; }
```
